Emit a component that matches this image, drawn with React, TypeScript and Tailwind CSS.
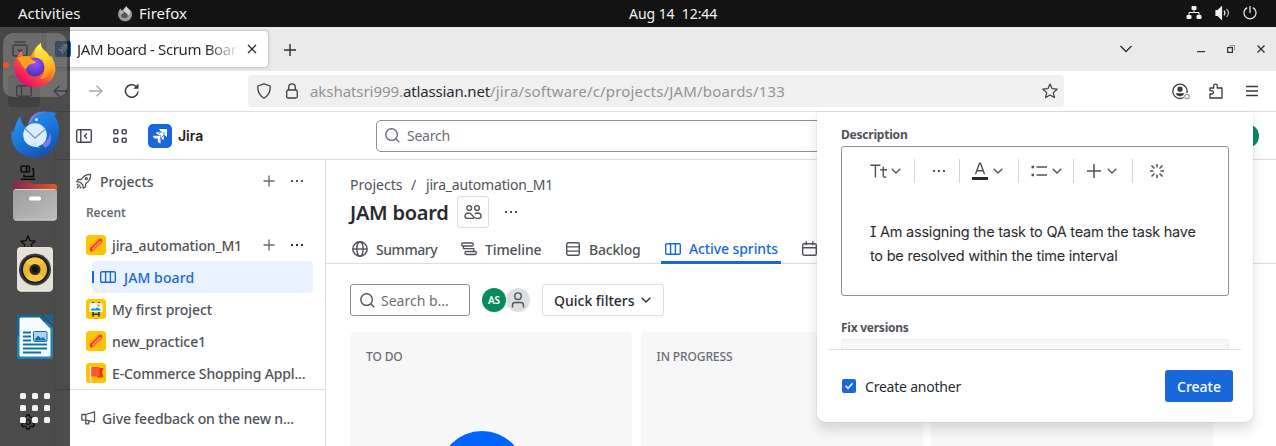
import type { ReactNode } from "react";

type IconProps = {
  w: number;
  h: number;
  className?: string;
  sw?: number;
  children: ReactNode;
};

function Icon({ w, h, className = "", sw = 1.4, children }: IconProps) {
  return (
    <svg
      width={w}
      height={h}
      viewBox={`0 0 ${w} ${h}`}
      fill="none"
      stroke="currentColor"
      strokeWidth={sw}
      className={`block shrink-0 ${className}`}
    >
      {children}
    </svg>
  );
}

const Plus = ({ className = "" }: { className?: string }) => (
  <Icon w={12} h={12} className={className}>
    <path d="M6 .5v11M.5 6h11" />
  </Icon>
);

const Dots = ({ className = "" }: { className?: string }) => (
  <Icon w={14} h={4} className={className}>
    <path d="M1 2h2M6 2h2M11 2h2" strokeWidth="2" />
  </Icon>
);

const Chevron = ({ className = "" }: { className?: string }) => (
  <Icon w={10} h={6} className={className} sw={1.3}>
    <path d="M.7.7 5 5 9.3.7" />
  </Icon>
);

const Magnifier = ({ className = "" }: { className?: string }) => (
  <Icon w={15} h={15} className={className} sw={1.4}>
    <circle cx="6.6" cy="6.6" r="5.8" />
    <path d="m10.8 10.8 3.4 3.4" />
  </Icon>
);

const BoardIcon = ({ className = "" }: { className?: string }) => (
  <Icon w={16} h={12} className={className} sw={1.4}>
    <rect x=".7" y=".7" width="14.6" height="10.6" rx="1.3" />
    <path d="M5.6.7v10.6M10.4.7v10.6" />
  </Icon>
);

const JiraMark = ({ size, radius }: { size: number; radius: number }) => (
  <svg width={size} height={size} viewBox="0 0 24 24" className="block shrink-0">
    <rect width="24" height="24" rx={radius} fill="#1868db" />
    <g fill="#fff">
      <path d="M11.300 5H19v7.700c-1.700-.2-2.700-1.300-2.700-2.900V7.900h-1.900c-1.700 0-2.900-1.200-3.100-2.900z" />
      <path d="M8.100 8.300h7.600V16c-1.700-.2-2.700-1.300-2.700-2.900v-1.900h-1.900C9.400 11.200 8.300 10 8.100 8.300z" />
      <path d="M4.900 11.700h7.600v7.700c-1.700-.2-2.700-1.300-2.700-2.900v-1.900H7.900c-1.700 0-2.800-1.200-3-2.900z" />
    </g>
    <path d="M8.500 12 12.700 7.800M11.700 15.200 16 11" stroke="#1868db" strokeWidth=".8" />
  </svg>
);

function TopBar() {
  return (
    <header className="relative flex h-[27px] shrink-0 items-center bg-[#131313] text-[#f2f2f2]">
      <span className="ml-[18px] w-[99px] text-[15px]">Activities</span>
      <svg width="16" height="16" viewBox="0 0 16 16" className="mr-[6px] block">
        <path
          d="M2 4.500 3.600 2.200l.6 2 2-.4C7 1.800 8.600.900 9.800.300c0 1.800 2 2.400 3 3.800l1 .1c2 3.400 1.600 6.700-.6 9-2.600 2.700-7.300 2.600-9.900.2C.9 11.200.4 7.700 2 4.500z"
          fill="#9b9b9b"
        />
        <circle cx="7.500" cy="8.700" r="3.400" fill="#555" />
        <path d="M9.800.300c0 1.800 2 2.400 3 4.200.8 2-.3 4.200-1.800 5-.5-2.500-4-3-4.500-5 1-1 1.500-3 3.300-4.200z" fill="#d0d0d0" />
        <path d="M2.300 5c2 .3 3 1 5 1-.5 1.600-2.300 1-2.800 2.500z" fill="#bbb" />
      </svg>
      <span className="w-[490px] text-[15px]">Firefox</span>
      <span className="-mt-px w-[557px] whitespace-pre text-[14px] tracking-[-0.05px]">Aug 14  12:44</span>
      <svg width="16" height="14" viewBox="0 0 16 14" className="-mt-px block" fill="#f2f2f2">
        <rect x="5.500" y="0" width="5" height="4" rx="1" />
        <rect x=".5" y="9" width="5" height="4" rx="1" />
        <rect x="10.500" y="9" width="5" height="4" rx="1" />
        <path d="M8 4v2.500M3 9V6.500h10V9" fill="none" stroke="#f2f2f2" />
      </svg>
      <svg width="16" height="14" viewBox="0 0 16 14" className="-mt-px ml-[13px] block" fill="none" stroke="#f2f2f2" strokeWidth="1.200">
        <path d="M1 4.500h2L6.500 1v12L3 9.500H1z" fill="#f2f2f2" />
        <path d="M9 4.700c1 1.300 1 3.300 0 4.600" />
        <path d="M11.500 2.800c2.300 2.500 2.300 5.900 0 8.400" stroke="#b5b5b5" />
      </svg>
      <svg width="14" height="14" viewBox="0 0 14 14" className="-mt-px ml-[12px] block" fill="none" stroke="#f2f2f2" strokeWidth="1.200">
        <path d="M4.200 1.600a6 6 0 1 0 5.600 0M7 0v7" />
      </svg>
    </header>
  );
}

function TabStrip() {
  return (
    <div className="flex h-[44px] shrink-0 items-start bg-[#eaeaea] text-[#303036]">
      <Icon w={16} h={16} className="mt-[14px] ml-[12px]" sw={1.5}>
        <rect x="1" y="4" width="14" height="11" rx="2" />
        <path d="M2.500 1h11M6 8.500l2 2 2-2" />
      </Icon>
      <span className="ml-[14px] h-[44px] w-px bg-[#c8c8c8]" />
      <div className="mt-1 ml-[3px] flex h-[36px] w-[222px] items-center rounded-[4px] bg-white pl-[9px] shadow-[0_0_3px_rgba(0,0,0,0.35)]">
        <JiraMark size={16} radius={3} />
        <span className="ml-[6px] w-[162px] overflow-hidden bg-linear-to-r from-[#26262b] from-80% to-transparent to-100% bg-clip-text text-[15px] tracking-[-0.38px] whitespace-nowrap text-transparent">
          JAM board - Scrum Boar
        </span>
        <Icon w={10} h={10} className="ml-[8px]" sw={1.4}>
          <path d="m1 1 8 8M9 1 1 9" />
        </Icon>
      </div>
      <Icon w={12} h={12} className="mt-[17px] ml-[16px]" sw={1.4}>
        <path d="M6 0v12M0 6h12" />
      </Icon>
      <Icon w={14} h={8} className="mt-[18px] ml-[823px]" sw={1.4}>
        <path d="m1.500 1 5.500 5.500L12.500 1" />
      </Icon>
      <Icon w={8} h={2} className="mt-[24px] ml-[64px]" sw={1.200}>
        <path d="M0 .6h8" />
      </Icon>
      <Icon w={8} h={8} className="mt-[18px] ml-[22px]" sw={1.200}>
        <rect x=".6" y="2.600" width="4.800" height="4.800" />
        <path d="M2.500.600h5v5" stroke="#999" />
      </Icon>
      <Icon w={8} h={8} className="mt-[18px] ml-[22px]" sw={1.300}>
        <path d="m.5.500 7 7M7.500.500l-7 7" />
      </Icon>
    </div>
  );
}

function AddressBar() {
  return (
    <div className="flex h-[40px] shrink-0 items-center bg-white text-[#3a3a40]">
      <span className="ml-2 flex size-8 items-center justify-center rounded-[4px] bg-[#d5d5d5]">
        <Icon w={16} h={12} sw={1.400}>
          <rect x=".7" y=".7" width="14.600" height="10.600" rx="2" />
          <path d="M5.500.700v10.600" />
        </Icon>
      </span>
      <Icon w={14} h={12} className="ml-[13px]">
        <path d="M14 6H1M6.500.700 1 6l5.500 5.300" />
      </Icon>
      <Icon w={14} h={12} className="ml-[22px] text-[#a9a9ab]">
        <path d="M0 6h13M7.500.700 13 6l-5.500 5.300" />
      </Icon>
      <Icon w={16} h={16} className="ml-[21px]" sw={1.500}>
        <path d="M14 8.500A6.300 6.300 0 1 1 12 3.400" />
        <path d="M14.500.500v5.200H9.300z" fill="currentColor" stroke="none" />
      </Icon>
      <div className="ml-[108px] flex h-8 w-[816px] items-center rounded-[4px] bg-[#f0f0f0] text-[15px] text-[#939395]">
        <Icon w={14} h={16} className="ml-[9px] text-[#3f3f44]" sw={1.300}>
          <path d="M7 .8 13.200 3c.3 5.500-1.500 9.600-6.200 12.200C2.300 12.600.500 8.500.800 3z" strokeLinejoin="round" />
        </Icon>
        <Icon w={12} h={16} className="ml-[15px] text-[#3f3f44]" sw={1.300}>
          <rect x=".7" y="7" width="10.600" height="8" rx="1.500" />
          <path d="M2.700 7V4.200a3.300 3.300 0 0 1 6.600 0V7" />
        </Icon>
        <span className="ml-[12px] w-[93px] whitespace-nowrap tracking-[-0.06px]">akshatsri999.</span>
        <span className="w-[87px] whitespace-nowrap tracking-[-0.17px] text-[#2b2b30]">atlassian.net</span>
        <span className="w-[541px] whitespace-nowrap tracking-[0.17px]">/jira/software/c/projects/JAM/boards/133</span>
        <Icon w={16} h={16} className="ml-[11px] text-[#3f3f44]" sw={1.200}>
          <path d="m8 1 2.100 4.700 5 .5-3.800 3.400 1.100 5L8 12l-4.400 2.600 1.100-5L.9 6.200l5-.5z" strokeLinejoin="round" />
        </Icon>
      </div>
      <Icon w={18} h={17} className="ml-[108px]" sw={1.300}>
        <circle cx="8" cy="8.300" r="7.200" />
        <circle cx="8" cy="6.200" r="2.600" fill="currentColor" stroke="none" />
        <path d="M3.500 10.300h9c-.8 2-2.500 3-4.500 3s-3.700-1-4.500-3z" fill="currentColor" stroke="none" />
        <circle cx="15" cy="13.500" r="3.500" fill="#fff" stroke="none" />
        <circle cx="15" cy="13.500" r="2.200" stroke="#a0a0a0" />
      </Icon>
      <Icon w={14} h={16} className="ml-[19px]" sw={1.300}>
        <path
          d="M1 5h3.700V3a1.800 1.800 0 0 1 3.600 0v2H13v10H1v-4h1.700a1.600 1.600 0 0 0 0-3.400H1z"
          strokeLinejoin="round"
        />
      </Icon>
      <Icon w={12} h={12} className="ml-[23px]" sw={1.300}>
        <path d="M0 1.500h12M0 6h12M0 10.500h12" />
      </Icon>
    </div>
  );
}

function FirefoxRail() {
  return (
    <div className="flex w-[54px] shrink-0 flex-col pl-[20px] text-[#222226]">
      <Icon w={16} h={16} className="mt-[54px]" sw={1.500}>
        <rect x="1" y="1" width="8.500" height="6" rx="1.500" />
        <path d="M6.500 1v6M12 4h1.500v7.500H4V9.500M1 14.200h14" />
      </Icon>
      <Icon w={16} h={16} className="mt-[54px]" sw={1.300}>
        <path d="m8 1 2.100 4.700 5 .5-3.800 3.400 1.100 5L8 12l-4.400 2.600 1.100-5L.9 6.200l5-.5z" />
      </Icon>
      <Icon w={16} h={16} className="mt-[163px]" sw={1.300}>
        <circle cx="8" cy="8" r="2.300" />
        <path
          d="M6.700 1h2.600l.5 2 1.300.8 2-.6 1.300 2.200-1.500 1.500v2.200l1.500 1.500-1.300 2.200-2-.6-1.300.8-.5 2H6.700l-.5-2-1.300-.8-2 .6-1.300-2.200 1.500-1.500V6.900L1.600 5.400l1.300-2.200 2 .6L6.200 3z"
          strokeLinejoin="round"
        />
      </Icon>
    </div>
  );
}

function JiraHeader() {
  return (
    <div className="flex h-[49px] shrink-0 items-center border-y border-t-[#e0e0e2] border-b-[#dddee1] text-[#44464d]">
      <Icon w={16} h={14} className="ml-[21px]">
        <rect x=".7" y=".7" width="14.600" height="12.600" rx="1.500" />
        <path d="M4.800.700v12.600M11 4.600 8.500 7l2.500 2.400" />
      </Icon>
      <Icon w={16} h={16} className="ml-[20px]" sw={1.500}>
        <rect x="1.800" y="1.800" width="4" height="4" rx="1" />
        <rect x="10.200" y="1.800" width="4" height="4" rx="1" />
        <rect x="1.800" y="10.200" width="4" height="4" rx="1" />
        <rect x="10.200" y="10.200" width="4" height="4" rx="1" />
      </Icon>
      <span className="ml-[20px]">
        <JiraMark size={24} radius={5} />
      </span>
      <span className="ml-[6px] w-[198px] font-['Inter'] text-[14px] font-semibold text-[#1e1f21]">Jira</span>
      <div className="flex h-8 w-[780px] shrink-0 items-center rounded-[5px] border border-[#8c8f97] pl-2 text-[14px] text-[#6b6e76]">
        <Magnifier />
        <span className="ml-[7px] tracking-[-0.25px]">Search</span>
      </div>
      <span className="ml-[79px] size-6 shrink-0 rounded-full bg-[#078b5c]" />
    </div>
  );
}

const HotDog = () => (
  <svg width="20" height="20" viewBox="0 0 20 20" className="block shrink-0">
    <rect width="20" height="20" rx="3.500" fill="#ffc400" />
    <path d="M6.800 13.200 13.200 6.800" stroke="#ff8b3d" strokeWidth="6.600" strokeLinecap="round" />
    <path d="M5.200 14.800 14.800 5.200" stroke="#de350b" strokeWidth="3" strokeLinecap="round" />
    <path d="m6 14 1.500-.3.300-1.600 1.600-.3.300-1.600 1.600-.3.300-1.600 1.600-.3.300-1.600 1-.3" stroke="#ffd9a0" fill="none" strokeWidth=".8" />
  </svg>
);

const Easel = () => (
  <svg width="20" height="20" viewBox="0 0 20 20" className="block shrink-0">
    <rect width="20" height="20" rx="3.500" fill="#ffc400" />
    <path d="M7 3v14.500M13 3v14.500M7 15.200h6" stroke="#253858" strokeWidth="1.600" />
    <rect x="3.500" y="4" width="13" height="9" rx="1" fill="#f4fbff" />
    <path d="M4.500 11.500c1-2.500 3-3 4.500-1.500 1.500-2 4.500-2 6 1.500z" fill="#00a3bf" />
    <circle cx="12.500" cy="6.500" r="1.300" fill="#ffab00" />
  </svg>
);

const Flag = () => (
  <svg width="20" height="20" viewBox="0 0 20 20" className="block shrink-0">
    <rect width="20" height="20" rx="3.500" fill="#ffc400" />
    <path d="M13 5h4.500l-1.500 4.800 1.500 4.700H11z" fill="#de350b" />
    <path d="M5 4h8.500v9.500H5z" fill="#ff5630" />
    <path d="M4.500 3v16.500" stroke="#dfe1e6" strokeWidth="1.400" />
  </svg>
);

function ProjectRow({ icon, children, actions }: { icon: ReactNode; children: ReactNode; actions?: boolean }) {
  return (
    <div className="flex h-8 items-center">
      <span className="ml-[31px]">{icon}</span>
      <span className="ml-[6px] grow whitespace-nowrap">{children}</span>
      {actions && (
        <>
          <Plus className="text-[#6b6e76]" />
          <Dots className="mr-[21px] ml-[15px] text-[#292a2e]" />
        </>
      )}
    </div>
  );
}

function Sidebar() {
  return (
    <nav className="flex w-[271px] shrink-0 flex-col border-r border-[#dddee1] pt-[5px] text-[14px] font-medium text-[#505258]">
      <div className="flex h-8 items-center">
        <Icon w={16} h={16} className="ml-[21px]" sw={1.300}>
          <path
            d="M5.300 6.500C7.500 3 10.500 1.300 14.600 1.400c.2 4-1.500 7.100-5 9.300L9.500 14l-2.200 1.200-.6-3.500-2.400-2.400-3.500-.6L2 6.500zM.8 15.200l3.400-3.400M.8 12.200l1.500-1.500M3.800 15.200l1.500-1.500"
            strokeLinejoin="round"
          />
          <circle cx="10.300" cy="5.700" r="1" />
        </Icon>
        <span className="ml-[8px] grow">Projects</span>
        <Plus className="text-[#6b6e76]" />
        <Dots className="mr-[21px] ml-[15px] text-[#505258]" />
      </div>
      <div className="flex h-8 items-center pl-[31px] text-[12px] font-semibold tracking-[-0.1px] text-[#6b6e76]">
        Recent
      </div>
      <ProjectRow icon={<HotDog />} actions>
        <span className="tracking-[-0.15px]">jira_automation_M1</span>
      </ProjectRow>
      <div className="mr-[12px] ml-[37px] flex h-8 shrink-0 items-center rounded-[4px] bg-[#e9f2fe] text-[#1868db]">
        <span className="h-3 w-[2px] bg-[#1868db]" />
        <BoardIcon className="ml-[6px]" />
        <span className="ml-[8px] tracking-[0.1px]">JAM board</span>
      </div>
      <ProjectRow icon={<Easel />}>
        <span className="tracking-[-0.08px]">My first project</span>
      </ProjectRow>
      <ProjectRow icon={<HotDog />}>
        <span className="tracking-[-0.09px]">new_practice1</span>
      </ProjectRow>
      <ProjectRow icon={<Flag />}>
        <span className="tracking-[-0.15px]">E-Commerce Shopping Appl...</span>
      </ProjectRow>
      <div className="flex grow items-center border-t border-[#dddee1] pl-[26px]">
        <Icon w={15} h={14} sw={1.300}>
          <path d="M.8 3.500h4L13.500.800v10l-8.700-1.600h-4zM4.800 3.500v9.300h3V9.800M13.500 4v3" strokeLinejoin="round" />
        </Icon>
        <span className="ml-[6px] whitespace-nowrap tracking-[-0.15px]">Give feedback on the new n...</span>
      </div>
    </nav>
  );
}

function ViewTabs() {
  return (
    <div className="flex h-[36px] pl-[2px] text-[14px] font-medium text-[#505258]">
      <div className="flex w-[109px] items-center pt-[6px]">
        <Icon w={16} h={16}>
          <circle cx="8" cy="8" r="7.200" />
          <ellipse cx="8" cy="8" rx="3.200" ry="7.200" />
          <path d="M.8 8h14.400" />
        </Icon>
        <span className="ml-2 tracking-[-0.45px]">Summary</span>
      </div>
      <div className="flex w-[105px] items-center pt-[6px]">
        <Icon w={16} h={14} sw={1.300}>
          <rect x=".7" y="1" width="11.500" height="3" rx="1.200" />
          <rect x="4" y="9.500" width="11.300" height="3" rx="1.200" />
          <path d="M2.500 4v2.700h10.300v2.800" />
        </Icon>
        <span className="ml-2 tracking-[-0.1px]">Timeline</span>
      </div>
      <div className="flex w-[95px] items-center pt-[6px]">
        <Icon w={14} h={14}>
          <rect x=".7" y=".7" width="12.600" height="12.600" rx="1.500" />
          <path d="M.7 4.900h12.600M.7 9.100h12.600" />
        </Icon>
        <span className="ml-[9px] tracking-[-0.2px]">Backlog</span>
      </div>
      <div className="flex h-[36px] w-[120px] shrink-0 items-center border-b-[3px] border-[#1868db] pt-[8px] pl-[4px] text-[#1868db]">
        <BoardIcon />
        <span className="ml-2 whitespace-nowrap tracking-[-0.1px]">Active sprints</span>
      </div>
      <div className="ml-[21px] flex items-center pt-[4px]">
        <Icon w={15} h={15}>
          <rect x=".7" y="2.700" width="13.600" height="11.600" rx="1.500" />
          <path d="M.7 6.800h13.600M4.200.300v4M10.800.300v4" />
        </Icon>
      </div>
    </div>
  );
}

function BoardColumn({ title, children }: { title: string; children?: ReactNode }) {
  return (
    <section className="w-[282px] shrink-0 overflow-hidden rounded-t-[5px] bg-[#f7f7f8] pt-[16px]">
      <h2 className="h-5 pl-4 text-[12px] leading-[18px] font-medium tracking-[-0.12px] text-[#6b6e76]">{title}</h2>
      {children}
    </section>
  );
}

function Board() {
  return (
    <main className="flex min-w-0 grow flex-col overflow-hidden pt-[14px] text-[#505258]">
      <div className="flex h-5 items-center pl-6 text-[14px]">
        <span className="w-[61px]">Projects</span>
        <span className="w-[15px]">/</span>
        <span className="tracking-[-0.19px]">jira_automation_M1</span>
      </div>
      <div className="mt-[2px] flex h-8 items-center pl-6">
        <h1 className="w-[107px] pt-px text-[20px] font-semibold tracking-[-0.25px] whitespace-nowrap text-[#292a2e]">
          JAM board
        </h1>
        <span className="flex size-8 items-center justify-center rounded-[3px] border border-[#dddee1]">
          <Icon w={18} h={16} sw={1.400}>
            <circle cx="5.200" cy="4" r="2.400" />
            <circle cx="13" cy="4" r="2.400" />
            <path d="M10 14.400H3.300C1.800 14.400 1 13.600 1 12.300 1 10.500 2.500 9 4.300 9c2 0 3 .8 4 2.300s2.200 3 4.200 3.100h2.300c1.400 0 2.200-.8 2.200-2.100C17 10.500 15.600 9 13.700 9c-1.200 0-2.200.200-3 .900" />
          </Icon>
        </span>
        <Dots className="ml-[15px]" />
      </div>
      <div className="pl-6 shadow-[inset_0_-1px_0_#dddee1]">
        <ViewTabs />
      </div>
      <div className="mt-5 flex h-8 shrink-0 items-center pl-6 text-[14px]">
        <div className="flex h-8 w-[120px] items-center rounded-[3px] border border-[#8c8f97] pl-[9px] text-[#6b6e76]">
          <Magnifier className="text-[#505258]" />
          <span className="ml-[6px] whitespace-nowrap">Search b...</span>
        </div>
        <span className="ml-[12px] flex size-6 items-center justify-center rounded-full bg-[#078b5c] text-[10px] font-semibold text-white">
          AS
        </span>
        <span className="flex size-6 items-center justify-center rounded-full bg-[#dddee1]">
          <Icon w={14} h={16}>
            <circle cx="7" cy="4.200" r="3.300" />
            <path d="M1.500 15.500v-2.300c0-1.700 1-2.700 2.700-2.700h5.600c1.700 0 2.700 1 2.700 2.700v2.300" />
          </Icon>
        </span>
        <div className="ml-[12px] flex h-8 w-[122px] items-center rounded-[3px] border border-[#dddee1] pl-[11px] font-medium text-[#292a2e]">
          <span className="w-[87px] whitespace-nowrap">Quick filters</span>
          <Chevron />
        </div>
      </div>
      <div className="mt-4 flex grow gap-[8.5px] pl-6">
        <BoardColumn title="TO DO">
          <div className="mt-[63px] ml-[89px] size-[86px] rounded-full bg-[#0065ff]" />
        </BoardColumn>
        <BoardColumn title="IN PROGRESS" />
        <BoardColumn title="DONE" />
      </div>
    </main>
  );
}

const Divider = ({ className = "" }: { className?: string }) => (
  <span className={`h-6 w-px shrink-0 bg-[#d5d6da] ${className}`} />
);

function CreateDialog() {
  return (
    <div className="absolute top-[112px] left-[817px] flex h-[310px] w-[436px] flex-col rounded-b-[8px] bg-white text-[#505258] shadow-[0_8px_12px_rgba(30,31,33,0.15),0_0_1px_rgba(30,31,33,0.31)]">
      <div className="flex h-[237px] flex-col overflow-hidden px-6 pt-[14px]">
        <label className="h-[20px] shrink-0 text-[12px] leading-[18px] font-bold tracking-[-0.21px]">Description</label>
        <div className="h-[150px] shrink-0 rounded-[3px] border border-[#8c8f97]">
          <div className="mt-[12px] flex h-6 items-center">
            <Icon w={17} h={14} className="ml-[28px]" sw={1.400}>
              <path d="M.3 1.200h10.200M5.400 1.200V13.500M10.200 5.800H17M13.200 2.500v9c0 1 .5 1.600 1.400 1.600h1.900" />
            </Icon>
            <Chevron className="ml-[4px]" />
            <Divider className="ml-[13px]" />
            <Dots className="ml-[17px]" />
            <Divider className="ml-[13px]" />
            <Icon w={16} h={18} className="ml-[12px]" sw={1.400}>
              <path d="M3.500 12.300 7.500 1.300h1l4 11M4.800 8.800h6.400" />
              <path d="M0 16.500h16" stroke="#292a2e" strokeWidth="3" />
            </Icon>
            <Chevron className="ml-[5px]" />
            <Divider className="ml-[15px]" />
            <Icon w={16} h={12} className="ml-[12px]" sw={1.400}>
              <path d="M5.500 2H16M5.500 10H16" />
              <path d="M.5 2h2.500M.5 10h2.500" strokeWidth="2.500" />
            </Icon>
            <Chevron className="ml-[5px]" />
            <Divider className="ml-[11px]" />
            <Icon w={14} h={14} className="ml-[13px]" sw={1.500}>
              <path d="M7 0v14M0 7h14" />
            </Icon>
            <Chevron className="ml-[6px]" />
            <Divider className="ml-[15px]" />
            <Icon w={14} h={14} className="ml-[17px]" sw={1.500}>
              <path d="M7 0v3.500M7 10.500V14M0 7h3.500M10.500 7H14M1.500 1.500l3 3M9.500 9.500l3 3M12.500 1.500l-3 3M4.500 9.500l-3 3" />
            </Icon>
          </div>
          <p className="mt-[37px] ml-[28px] w-[340px] font-['Inter'] text-[14.5px] leading-6 tracking-[-0.23px] whitespace-nowrap text-[#292a2e] [font-feature-settings:'cv08']">
            I Am assigning the task to QA team the task have
            <br />
            to be resolved within the time interval
          </p>
        </div>
        <label className="mt-[23px] h-[20px] shrink-0 text-[12px] leading-[18px] font-bold tracking-[-0.25px]">Fix versions</label>
        <div className="h-8 shrink-0 rounded-[3px] border border-[#ececee] bg-[#f7f7f8]" />
      </div>
      <div className="mx-[12px] h-px bg-[#dddee1]" />
      <div className="flex grow items-center pr-5 pl-[25px]">
        <span className="flex size-[14px] items-center justify-center rounded-[2px] bg-[#1868db]">
          <Icon w={10} h={8} className="text-white" sw={1.500}>
            <path d="m1.500 3.800 2.500 2.700L8.500 1.300" />
          </Icon>
        </span>
        <span className="ml-[9px] grow text-[14px] tracking-[-0.22px] text-[#292a2e]">Create another</span>
        <button className="h-8 w-[68px] rounded-[3px] bg-[#1868db] text-[14px] font-medium text-white">Create</button>
      </div>
    </div>
  );
}

function FirefoxLogo() {
  return (
    <svg width="42" height="44" viewBox="0 0 42 44" className="block">
      <defs>
        <linearGradient id="ffBody" x1=".85" y1=".1" x2=".25" y2=".95">
          <stop offset="0" stopColor="#ffe226" />
          <stop offset=".35" stopColor="#ff9a1f" />
          <stop offset=".65" stopColor="#ff4a3a" />
          <stop offset="1" stopColor="#e5077a" />
        </linearGradient>
        <linearGradient id="ffFlame" x1=".4" y1="0" x2=".6" y2="1">
          <stop offset="0" stopColor="#fff44f" />
          <stop offset=".5" stopColor="#ffd02e" />
          <stop offset="1" stopColor="#ff8a1c" />
        </linearGradient>
        <radialGradient id="ffGlobe" cx=".5" cy=".3" r=".7">
          <stop offset="0" stopColor="#a14bff" />
          <stop offset=".6" stopColor="#6b3fd6" />
          <stop offset="1" stopColor="#4535b0" />
        </radialGradient>
      </defs>
      <path
        d="M3.500 13.500C4.500 11 6 9 8 8c-.2 2.500.3 4 1.500 5.500 2-.7 5-.8 7-.3C19 10 20.500 4 27 0c-.3 4 1.500 6 4.500 8.500 2 1.500 3.500 3.500 4.500 6l1-2c5 8 6.500 17 .5 24C33 41.500 27 44 21 44 9 44 0 34.500 0 23c0-3.500 1-6.800 3.500-9.500z"
        fill="url(#ffBody)"
      />
      <path d="M27 0c-.3 4 1.500 6 4.500 8.500 7 6 8.500 17 3.500 23-2.500 3-6 4.500-9.500 4.500 5-4 6.500-9 3.500-14C26.500 18 19.500 18 20.500 10.500 21.500 6 23.500 2.500 27 0z" fill="url(#ffFlame)" />
      <circle cx="21" cy="24" r="9.500" fill="url(#ffGlobe)" />
      <path d="M3 15c4-2 9-2 13-1 1 2 3 3.500 6 4.500-.5 2-3.500 2.500-6 3-2.500.8-2.500 3-4.500 5C8.500 24 7 20 3 15z" fill="#ffa01e" />
    </svg>
  );
}

function ThunderbirdLogo() {
  return (
    <svg width="48" height="47" viewBox="0 0 48 47" className="block">
      <defs>
        <linearGradient id="tbBody" x1="0" y1="0" x2=".6" y2="1">
          <stop offset="0" stopColor="#2f9bf5" />
          <stop offset=".6" stopColor="#1a74dc" />
          <stop offset="1" stopColor="#1454b0" />
        </linearGradient>
      </defs>
      <path
        d="M10 5c-1 4 1 7 3 10l4 1C17.500 8 22 2 30 .8c5-.8 10 .2 16 1.200-2 1-2.500 2-2 3.500 4 6 5 14 3.500 20C45 38 36 46.500 24 46.500 11 46.500 1.500 38 .5 27c-.5-3 0-6 .5-8l2 3C3.500 15 6 9 10 5z"
        fill="url(#tbBody)"
      />
      <path d="M17.500 13C19 5 25 .5 34 .8 27 2 22.500 5 20.500 11z" fill="#8a7bea" />
      <path d="M34 37c5-3 8-8 5-15-1 6-4 9-8 11z" fill="#6f7ef0" />
      <circle cx="24" cy="24" r="11.800" fill="#d9efff" />
      <path d="M14 17.500 24 27l10.500-9" fill="none" stroke="#7d9cc0" strokeWidth="1.300" />
      <path d="M19 33c3 2.500 6 3.500 10 3.500-3-1.500-4-3-4-5z" fill="#c5e2fa" />
      <circle cx="25.500" cy="8.500" r="1.500" fill="#e5f2ff" />
    </svg>
  );
}

function FilesLogo() {
  return (
    <svg width="46" height="41" viewBox="0 0 46 41" className="block">
      <defs>
        <linearGradient id="flTop" x1="0" y1="0" x2="1" y2="0">
          <stop offset="0" stopColor="#7b2a55" />
          <stop offset="1" stopColor="#e95420" />
        </linearGradient>
        <linearGradient id="flFront" x1="0" y1="0" x2="1" y2="1">
          <stop offset="0" stopColor="#9d9d9d" />
          <stop offset="1" stopColor="#bdbdbd" />
        </linearGradient>
      </defs>
      <path d="M1 20V4a3 3 0 0 1 3-3h12c3 0 3 3 6 3h20a3 3 0 0 1 3 3v13z" fill="url(#flTop)" />
      <rect x="1" y="9" width="44" height="31.500" rx="3" fill="url(#flFront)" />
      <path d="M3 9.500h40M3 40h40" stroke="#d2d2d2" />
      <rect x="17" y="16.500" width="12" height="4" rx="1.500" fill="#fff" />
    </svg>
  );
}

function SpeakerLogo() {
  return (
    <svg width="36" height="45" viewBox="0 0 36 45" className="block">
      <rect width="36" height="44.500" rx="4" fill="#e6e1d6" />
      <path d="M3 44h30" stroke="#f5f2ea" />
      <circle cx="18" cy="22.500" r="16" fill="#3c3c44" />
      <circle cx="18" cy="22.500" r="14" fill="#1e1e26" />
      <circle cx="18" cy="22.500" r="12" fill="#e9b62c" />
      <path d="M18 22.500 9 14.500a12 12 0 0 1 18 0zM18 22.500l9 8a12 12 0 0 1-18 0z" fill="#f3c83e" />
      <circle cx="18" cy="22.500" r="5.500" fill="#2a2a2e" />
      <circle cx="18" cy="22.500" r="3" fill="#111" />
    </svg>
  );
}

function WriterLogo() {
  return (
    <svg width="36" height="44" viewBox="0 0 36 44" className="block">
      <path d="M0 3a3 3 0 0 1 3-3h20l13 13v28a3 3 0 0 1-3 3H3a3 3 0 0 1-3-3z" fill="#1c82b8" />
      <path d="M0 22V3a3 3 0 0 1 3-3h20l6 6z" fill="#0f69a0" />
      <path d="M2.500 4A1.500 1.500 0 0 1 4 2.500h18.500L33.500 14v26a1.500 1.500 0 0 1-1.500 1.500H4A1.500 1.500 0 0 1 2.500 40z" fill="#f8fbfd" />
      <path d="M26 0h8.500A1.500 1.500 0 0 1 36 1.500V10z" fill="#0f69a0" />
      <path d="M6 17.500h8M6 21.500h8M6 25.500h8M6 29.500h24M6 33.500h24M6 37.500h18" stroke="#0f6fb0" strokeWidth="1.800" />
      <rect x="16.500" y="16.500" width="13.500" height="10" rx="1" fill="#a9d5ee" stroke="#0f6fb0" />
      <path d="m17 25.500 4-5 3 3 2-1.500 3.500 3.500z" fill="#0f6fb0" />
    </svg>
  );
}

function Dock() {
  return (
    <aside className="absolute top-[27px] left-0 flex h-[419px] w-[70px] flex-col items-center bg-black/70">
      <div className="relative mt-[6px] flex size-16 shrink-0 justify-center rounded-[10px] bg-white/20 pt-[10px]">
        <FirefoxLogo />
        <span className="absolute top-[29px] left-0 size-[6px] rounded-full bg-[#f0561d]" />
      </div>
      <div className="mt-[14px]">
        <ThunderbirdLogo />
      </div>
      <div className="mt-[22px]">
        <FilesLogo />
      </div>
      <div className="mt-[26px]">
        <SpeakerLogo />
      </div>
      <div className="mt-[23px]">
        <WriterLogo />
      </div>
      <div className="mt-[34px] grid grid-cols-3 gap-[6px]">
        {Array.from({ length: 9 }, (_, i) => (
          <span key={i} className="size-[6px] rounded-[1.5px] bg-[#f2f2f2]" />
        ))}
      </div>
    </aside>
  );
}

export default function App() {
  return (
    <div className="relative flex h-[446px] w-[1276px] flex-col overflow-hidden bg-white font-['Noto_Sans',sans-serif]">
      <TopBar />
      <TabStrip />
      <AddressBar />
      <div className="flex min-h-0 grow">
        <FirefoxRail />
        <div className="flex min-w-0 grow flex-col border-l border-[#e6e6e8]">
          <JiraHeader />
          <div className="flex min-h-0 grow">
            <Sidebar />
            <Board />
          </div>
        </div>
      </div>
      <CreateDialog />
      <Dock />
    </div>
  );
}
